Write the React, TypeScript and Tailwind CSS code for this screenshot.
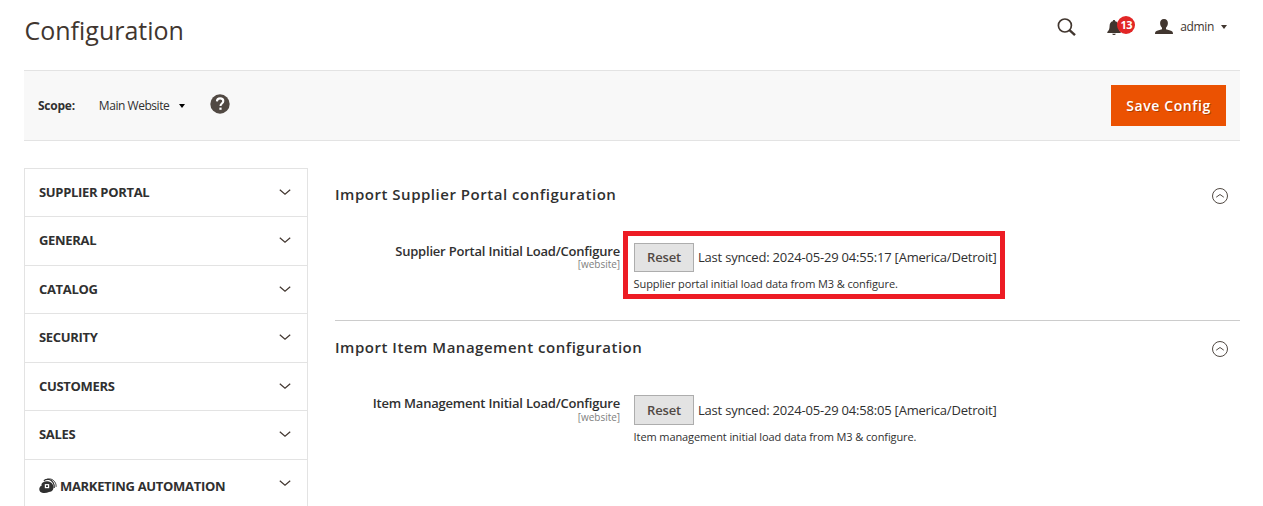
import React from "react";

const FONT = "font-['Open_Sans','Noto_Sans',sans-serif]";

function ChevronDown() {
  return (
    <svg className="mt-[20px] h-[7px] w-[12px]" viewBox="0 0 12 7" fill="none" stroke="#41362f" strokeWidth="1.2">
      <path d="M0.8 0.8 6 5.3 11.2 0.8" />
    </svg>
  );
}

function Robot() {
  return (
    <svg className="mr-[3px] h-[16px] w-[18px]" viewBox="0 0 18 16">
      <path d="M3.800 4.400C6.200 2.700 9.800 3 12 4.600c2.500 1.900 3.200 5 1.800 7.500-.7 1.300-2.300 1.700-3.800 2-2.800 1.200-7 1.300-8.800-.4C-.6 11.600.4 8.500 2.800 7.600 2.100 6.400 2.500 5.200 3.800 4.400z" fill="#303030" />
      <path d="M4.800 2.700C8.500 0 12.300 1.700 14 4.300c1.200 2 1.500 3.700 1.200 5.700" stroke="#303030" strokeWidth="1.200" fill="none" />
      <path d="M8 1.300c3.500-1.100 6.500.4 8 3 .9 1.500 1.200 3 1.100 4.500" stroke="#303030" strokeWidth="1" fill="none" />
      <rect x="6.400" y="6.700" width="3.200" height="2.900" fill="#303030" stroke="#fff" strokeWidth="1.200" />
    </svg>
  );
}

const sections: string[] = ["SUPPLIER PORTAL", "GENERAL", "CATALOG", "SECURITY", "CUSTOMERS", "SALES", "MARKETING AUTOMATION"];

function Sidebar() {
  return (
    <nav className="h-[338px] w-[284px] shrink-0 overflow-hidden border-x border-[#e3e3e3]">
      {sections.map((s, i) => (
        <div key={s} className="flex h-12 items-start justify-between border-t border-[#e3e3e3] pr-[16px] pl-[14px] even:h-[49px]">
          <div className={i === 6 ? "flex items-center pt-[16px]" : "flex pt-[13px]"}>
            {i === 6 && <Robot />}
            <span className="text-[13px] leading-5 font-bold tracking-[-0.32px] whitespace-nowrap text-[#303030]">{s}</span>
          </div>
          <ChevronDown />
        </div>
      ))}
    </nav>
  );
}

function CollapseIcon() {
  return (
    <svg className="mt-[20px] mr-[12px] h-[16px] w-[16px]" viewBox="0 0 16 16" fill="none" stroke="#514943">
      <circle cx="8" cy="8" r="7.5" strokeWidth="1" />
      <path d="M4.200 9.200 8 6.500 11.800 9.200" strokeWidth="1" />
    </svg>
  );
}

interface GroupProps {
  title: string;
  label: string;
  time: string;
  note: string;
  highlighted?: boolean;
}

function Group({ title, label, time, note, highlighted }: GroupProps) {
  return (
    <section className={highlighted ? "h-[153px] border-b border-[#cccccc]" : "h-[185px]"}>
      <div className={highlighted ? "flex h-[63px] justify-between" : "flex h-[62px] justify-between"}>
        <h2 className="pt-[14px] text-[15px] leading-6 font-semibold tracking-[0.52px] text-[#303030]">{title}</h2>
        <CollapseIcon />
      </div>
      <div className="flex">
        <div className={highlighted ? "w-[285px] pt-[12px] text-right" : "w-[285px] pt-[12px] text-right"}>
          <div className={highlighted ? "text-[13px] leading-[16px] font-semibold tracking-[-0.21px] text-[#303030]" : "text-[13px] leading-[16px] font-semibold tracking-[-0.21px] text-[#303030]"}>{label}</div>
          <div className={highlighted ? "text-[10px] leading-[10px] tracking-[-0.03px] text-[#808080]" : "pt-px text-[10px] leading-[10px] tracking-[-0.03px] text-[#808080]"}>[website]</div>
        </div>
        <div className={highlighted ? "ml-[3px] h-[68px] w-[382px] border-[5px] border-[#ed1c24] pt-[7px] pl-[6px]" : "ml-[3px] h-[68px] w-[382px] pt-[12px] pl-[11px]"}>
          <div className="flex items-center">
            <button className={highlighted ? "h-[29px] w-[60px] shrink-0 border border-[#adadad] bg-[#e3e3e3] text-[13px] leading-none font-semibold tracking-[-0.15px] text-[#514943]" : "h-[30px] w-[60px] shrink-0 border border-[#adadad] bg-[#e3e3e3] text-[13px] leading-none font-semibold tracking-[-0.15px] text-[#514943]"}>
              Reset
            </button>
            <span className={highlighted ? "ml-[4px] text-[13px] tracking-[-0.2px] whitespace-nowrap text-[#303030]" : "ml-[4px] pt-[2px] text-[13px] tracking-[-0.2px] whitespace-nowrap text-[#303030]"}>Last synced: {time} [America/Detroit]</span>
          </div>
          <p className="mt-[4px] -ml-[0.4px] text-[11px] leading-[15px] tracking-[-0.1px] whitespace-nowrap text-[#303030]">{note}</p>
        </div>
      </div>
    </section>
  );
}

export default function App() {
  return (
    <div className={`h-[506px] w-[1263px] overflow-hidden bg-white pr-[23px] pl-[24px] ${FONT}`}>
      <header className="flex h-[70px] justify-between">
        <h1 className="pt-[11px] pl-[0.5px] text-[25px] leading-[38px] text-[#41362f]">Configuration</h1>
        <div className="flex pt-[17px] pr-[13px]">
          <svg className="mt-px h-[19px] w-[20px]" viewBox="0 0 20 19" fill="none" stroke="#41362f">
            <circle cx="7.900" cy="7.500" r="6.500" strokeWidth="1.700" />
            <path d="M12.500 12.100 18 17.200" strokeWidth="2.400" />
          </svg>
          <div className="relative ml-[30px] h-[20px] w-[28px]">
            <svg className="mt-[3px] h-[16px] w-[14px]" viewBox="0 0 14 16" fill="#41362f">
              <path d="M7 0c.8 0 1.200.5 1.200 1.200C10.500 1.700 11.300 3.500 11.400 6c.1 3 .6 4.500 2.300 6v1H.3v-1C2 10.500 2.500 9 2.600 6 2.700 3.500 3.500 1.700 5.800 1.200 5.800.5 6.200 0 7 0zM5.200 13.700h3.600C8.500 14.700 7.800 15.100 7 15.100s-1.500-.4-1.800-1.400z" />
            </svg>
            <span className="absolute top-[-1px] left-[10px] flex h-[18px] w-[18px] items-center justify-center rounded-full bg-[#e22626] text-[11px] font-bold tracking-[-0.5px] text-white">13</span>
          </div>
          <svg className="mt-[2px] ml-[20px] h-[15px] w-[18px]" viewBox="0 0 18 15" fill="#41362f">
            <path d="M9 0c2.600 0 3.900 1.700 3.900 4.100 0 1.900-.8 3.700-1.900 4.700v1.400l5 1.600c1.300.5 2 1.300 2 3.200H0c0-1.900.7-2.700 2-3.200l5-1.600V8.800C5.900 7.800 5.100 6 5.100 4.100 5.100 1.700 6.400 0 9 0z" />
          </svg>
          <span className="ml-[7px] text-[12px] leading-[19px] tracking-[-0.35px] text-[#41362f]">admin</span>
          <svg className="mt-[8px] ml-[7px] h-[4px] w-[6px]" viewBox="0 0 6 4" fill="#41362f">
            <path d="M0 0h6L3 4z" />
          </svg>
        </div>
      </header>

      <div className="flex h-[71px] items-center border-y border-[#e3e3e3] bg-[#f8f8f8] pr-[14px] pl-[14px] text-[12px] text-[#303030]">
        <span className="font-bold tracking-[-0.25px]">Scope:</span>
        <span className="ml-[24px] tracking-[-0.45px]">Main Website</span>
        <svg className="ml-[10px] h-[4px] w-[6px]" viewBox="0 0 6 4">
          <path d="M0 0h6L3 4z" fill="#000" />
        </svg>
        <svg className="mb-[3px] ml-[25px] h-[20px] w-[20px]" viewBox="0 0 20 20">
          <circle cx="10" cy="10" r="9.700" fill="#514943" />
          <path d="M6.900 7.400C7 5.500 8.200 4.400 10.100 4.400c2 0 3.200 1 3.200 2.700 0 2.400-2.800 2.400-2.800 4.800" fill="none" stroke="#fff" strokeWidth="2.100" />
          <rect x="9.400" y="13.600" width="2.200" height="2.200" fill="#fff" />
        </svg>
        <button className="ml-auto h-[41px] w-[115px] bg-[#eb5202] text-[14px] font-semibold tracking-[0.6px] text-white [text-shadow:1px_1px_0_rgba(0,0,0,0.25)]">Save Config</button>
      </div>

      <div className="flex pt-[27px]">
        <Sidebar />
        <main className="ml-[27px] flex-1">
          <Group title="Import Supplier Portal configuration" label="Supplier Portal Initial Load/Configure" time="2024-05-29 04:55:17" note="Supplier portal initial load data from M3 & configure." highlighted />
          <Group title="Import Item Management configuration" label="Item Management Initial Load/Configure" time="2024-05-29 04:58:05" note="Item management initial load data from M3 & configure." />
        </main>
      </div>
    </div>
  );
}
